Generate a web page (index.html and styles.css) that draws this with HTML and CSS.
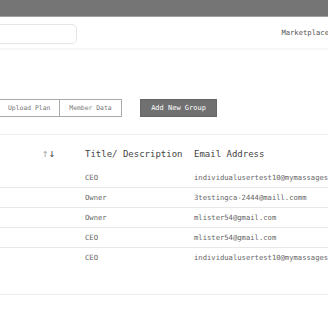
FILE: index.html
```html
<!DOCTYPE html>
<html>
<head>
  <meta charset="utf-8">
  <meta name="viewport" content="width=device-width, initial-scale=1">
  <title>Members</title>
  <link rel="stylesheet" href="styles.css">
</head>
<body>
    <div class="topbar"></div>
    <div class="header">
        <div class="search"></div>
        <div class="nav">Marketplace</div>
    </div>
    <div class="content">
        <div class="toolbar">
            <div class="seg">
                <div class="seg-btn">Upload Plan</div>
                <div class="seg-btn">Member Data</div>
            </div>
            <div class="add-btn">Add New Group</div>
        </div>
        <div class="card">
            <div class="table-wrap">
                <table class="members">
                    <thead>
                        <tr>
                            <th class="sort"><span class="up">↑</span><span class="down">↓</span></th>
                            <th class="title-col">Title/ Description</th>
                            <th>Email Address</th>
                        </tr>
                    </thead>
                    <tbody>
                        <tr><td></td><td>CEO</td><td>individualusertest10@mymassages.com</td></tr>
                        <tr><td></td><td>Owner</td><td>3testingca-2444@maill.comm</td></tr>
                        <tr><td></td><td>Owner</td><td>mlister54@gmail.com</td></tr>
                        <tr><td></td><td>CEO</td><td>mlister54@gmail.com</td></tr>
                        <tr><td></td><td>CEO</td><td>individualusertest10@mymassages.com</td></tr>
                    </tbody>
                </table>
            </div>
            <div class="card-footer"></div>
        </div>
    </div>
</body>
</html>
```
FILE: styles.css
```css
body {
    margin: 0;
    font-family: "DejaVu Sans Mono", monospace;
    color: #555;
    background-color: #fff;
    overflow: hidden;
}
.topbar {
    height: 16px;
    background-color: #757575;
    border-bottom: 1px solid #a3a3a3;
}
.header {
    height: 31px;
    display: flex;
    align-items: center;
    justify-content: space-between;
    box-shadow: 0 1px 3px rgba(0, 0, 0, 0.07);
}
.search {
    width: 85px;
    height: 18px;
    margin-left: -10px;
    margin-top: 3px;
    border: 1px solid #e6e6e6;
    border-radius: 5px;
}
.nav {
    font-size: 7.2px;
    color: #555;
    margin-right: -1px;
    white-space: nowrap;
}
.toolbar {
    display: flex;
    margin-top: 51px;
}
.seg {
    display: flex;
    margin-left: -2px;
}
.seg-btn {
    height: 16px;
    line-height: 16px;
    padding: 0 9px;
    font-size: 6.4px;
    color: #777;
    border: 1px solid #aaa;
    white-space: nowrap;
}
.seg-btn + .seg-btn { border-left: none; }
.add-btn {
    margin-left: 18px;
    height: 16px;
    line-height: 16px;
    padding: 0 10.5px;
    font-size: 7px;
    color: #fff;
    background-color: #707070;
    border: 1px solid #666;
    white-space: nowrap;
}
.card {
    width: 440px;
    margin-top: 17px;
    border-top: 1px solid #f0f0f0;
    box-shadow: 0 2px 3px rgba(0, 0, 0, 0.22);
}
.table-wrap {
    padding-bottom: 27px;
    border-bottom: 1px solid #ececec;
}
.members {
    width: 100%;
    border-collapse: collapse;
}
.members th {
    text-align: left;
    font-weight: normal;
    font-size: 9px;
    color: #444;
    padding: 13px 0 8px;
    line-height: 12px;
    white-space: nowrap;
}
.members th.sort {
    width: 55px;
    padding-right: 30px;
    text-align: right;
    font-size: 11px;
}
.members th.title-col { width: 109px; }
.up { color: #aaa; }
.down { color: #555; }
.members td {
    height: 19px;
    padding: 0;
    font-size: 7.2px;
    color: #666;
    white-space: nowrap;
}
.members tbody tr { border-bottom: 1px solid #e8e8e8; }
.members tbody tr:last-child { border-bottom: none; }
.card-footer { height: 18px; }
```
